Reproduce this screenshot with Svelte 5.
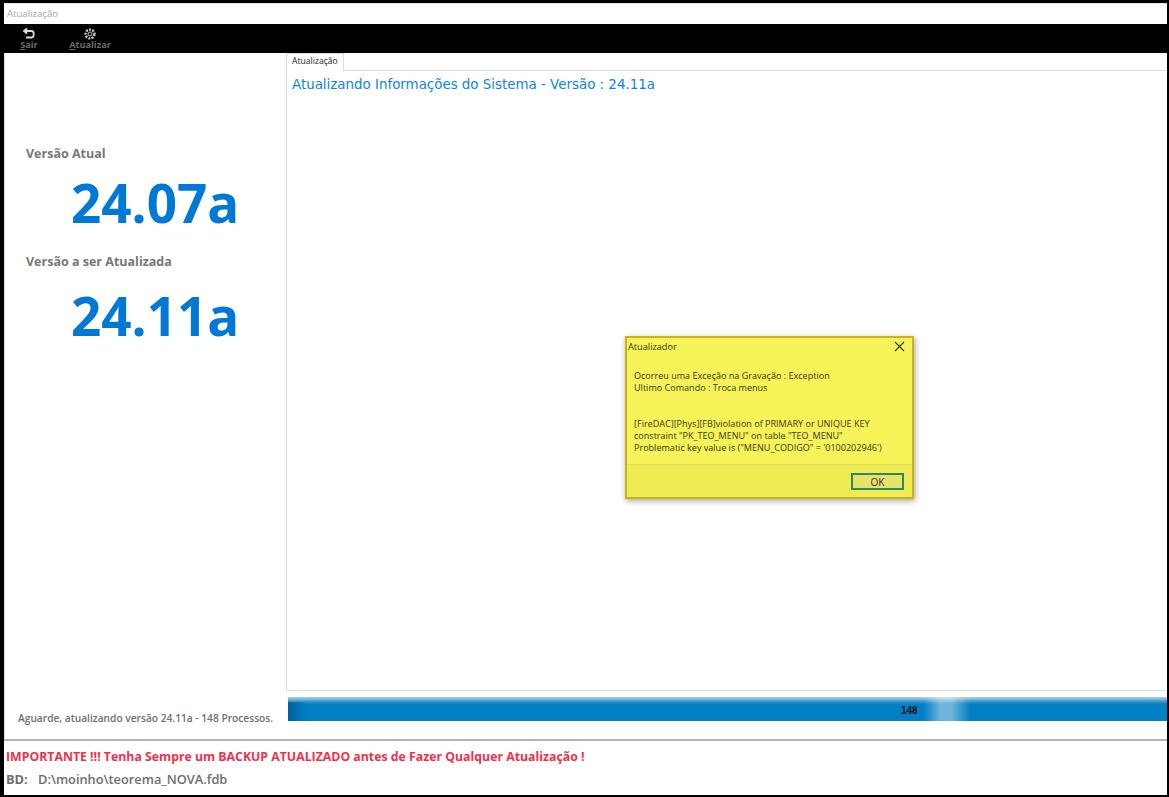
<script>
	const version = "24.11a";
	const processos = 148;
</script>

<div class="window">
	<div class="titlebar">Atualização</div>

	<div class="toolbar">
		<div class="tool sair">
			<svg width="16" height="14" viewBox="0 0 16 14">
				<path d="M6 1.5 L3 4 L6 6.5 M3.5 4 H10.5 C13.5 4 13.5 10.5 10.5 10.5 H5" fill="none" stroke="#d8d8d8" stroke-width="1.8" />
			</svg>
			<span><u>S</u>air</span>
		</div>
		<div class="tool atualizar">
			<svg width="14" height="14" viewBox="0 0 14 14">
				<circle cx="7" cy="7" r="4.4" fill="none" stroke="#c4c4c4" stroke-width="2.4" stroke-dasharray="2 1.2" />
				<circle cx="7" cy="7" r="2" fill="none" stroke="#c4c4c4" stroke-width="1" />
			</svg>
			<span><u>A</u>tualizar</span>
		</div>
	</div>

	<div class="main">
		<aside class="left">
			<div class="versions">
				<div class="label">Versão Atual</div>
				<div class="number">24.07a</div>
				<div class="label second">Versão a ser Atualizada</div>
				<div class="number next">{version}</div>
			</div>
			<div class="wait">Aguarde, atualizando versão {version} - {processos} Processos.</div>
		</aside>

		<section class="right">
			<div class="tabs"><div class="tab">Atualização</div></div>
			<div class="page">
				<h1>Atualizando Informações do Sistema - Versão : {version}</h1>
			</div>
			<div class="progress">
				<div class="edge"></div>
				<div class="shine"></div>
				<span>{processos}</span>
			</div>
		</section>
	</div>

	<div class="footer">
		<div class="warn">IMPORTANTE !!! Tenha Sempre um BACKUP ATUALIZADO antes de Fazer Qualquer Atualização !</div>
		<div class="db"><span class="dbl">BD:</span>D:\moinho\teorema_NOVA.fdb</div>
	</div>

	<div class="dialog">
		<div class="dlg-title">
			<span>Atualizador</span>
			<svg width="11" height="11" viewBox="0 0 11 11">
				<path d="M1 1 L10 10 M10 1 L1 10" stroke="#333" stroke-width="1.1" fill="none" />
			</svg>
		</div>
		<div class="dlg-body">
			<p>Ocorreu uma Exceção na Gravação : Exception<br />Ultimo Comando : Troca menus</p>
			<p>[FireDAC][Phys][FB]violation of PRIMARY or UNIQUE KEY<br />constraint "PK_TEO_MENU" on table "TEO_MENU"<br />Problematic key value is ("MENU_CODIGO" = '0100202946')</p>
		</div>
		<div class="dlg-foot">
			<button type="button">OK</button>
		</div>
	</div>
</div>

<style>
	:global(body) {
		margin: 0;
		background: #000;
	}

	.window {
		position: relative;
		box-sizing: border-box;
		width: 1169px;
		height: 797px;
		padding: 3px 2px 2px 4px;
		background: #000;
		overflow: hidden;
		font-family: "Open Sans", "Noto Sans", sans-serif;
		display: flex;
		flex-direction: column;
	}

	.titlebar {
		height: 21px;
		flex: none;
		background: #fff;
		border-top: 1px solid #e4e4e4;
		box-sizing: border-box;
		color: #a8a4a8;
		font-size: 9.6px;
		line-height: 19px;
		padding-left: 3px;
	}

	.toolbar {
		height: 29px;
		flex: none;
		background: #000;
		display: flex;
		color: #6c6c6c;
		font-weight: 700;
		font-size: 9.2px;
	}

	.tool {
		display: flex;
		flex-direction: column;
		align-items: center;
	}
	.tool svg {
		display: block;
		margin-top: 3px;
	}
	.tool span {
		line-height: 10px;
		margin-top: -1px;
	}
	.sair {
		margin-left: 15px;
		width: 20px;
	}
	.atualizar {
		margin-left: 30px;
		width: 42px;
	}

	.main {
		flex: 1;
		min-height: 0;
		display: flex;
		background: #fff;
	}

	.left {
		width: 282px;
		flex: none;
		display: flex;
		flex-direction: column;
		justify-content: space-between;
		border-left: 1px solid #ddd;
		box-sizing: border-box;
	}

	.versions {
		padding: 92px 0 0 21px;
	}
	.label {
		color: #777;
		font-weight: 700;
		font-size: 12.5px;
		line-height: 18px;
	}
	.label.second {
		margin-top: 14px;
	}
	.number {
		color: #0078d7;
		font-weight: 700;
		font-size: 53px;
		line-height: 72px;
		padding-left: 45px;
		margin-top: 4px;
	}
	.number.next {
		margin-top: 9px;
	}

	.wait {
		color: #6f6f6f;
		font-weight: 600;
		font-size: 10.2px;
		line-height: 16px;
		padding: 0 0 13px 13px;
	}

	.right {
		flex: 1;
		min-width: 0;
		display: flex;
		flex-direction: column;
	}

	.tabs {
		height: 17px;
		flex: none;
		display: flex;
		border-bottom: 1px solid #dcdcdc;
	}
	.tab {
		box-sizing: border-box;
		height: 18px;
		padding: 0 5px;
		background: #fff;
		border: 1px solid #dcdcdc;
		border-bottom: none;
		font-size: 8.6px;
		line-height: 15px;
		color: #222;
	}

	.page {
		flex: 1;
		border-left: 1px solid #dcdcdc;
		border-bottom: 1px solid #dcdcdc;
		padding: 5px 0 0 5px;
	}
	h1 {
		margin: 0;
		font-family: "DejaVu Sans", sans-serif;
		font-weight: 400;
		font-size: 13.4px;
		line-height: 18px;
		color: #0a84e6;
	}

	.progress {
		position: relative;
		flex: none;
		height: 24px;
		margin: 6px 0 18px 2px;
		background: linear-gradient(#c4c8cc 0, #7fbcdc 2px, #3f9fd0 4px, #0380c4 7px, #0380c4 100%);
		overflow: hidden;
	}
	.progress span {
		position: absolute;
		left: 613px;
		top: 7px;
		color: #111;
		font-family: "Liberation Sans", sans-serif;
		font-weight: 700;
		font-size: 10px;
		line-height: 14px;
	}
	.edge {
		position: absolute;
		left: 0;
		top: 5px;
		bottom: 0;
		width: 20px;
		background: linear-gradient(90deg, #00609c, rgba(3, 128, 196, 0));
	}
	.shine {
		position: absolute;
		left: 636px;
		top: 0;
		bottom: 0;
		width: 46px;
		background: linear-gradient(90deg, rgba(255, 255, 255, 0), rgba(255, 255, 255, 0.42) 35%, rgba(255, 255, 255, 0.42) 60%, rgba(255, 255, 255, 0));
	}

	.footer {
		flex: none;
		height: 56px;
		background: #fff;
		border-top: 2px solid #b4b4b4;
		box-sizing: border-box;
		padding: 7px 0 0 2px;
		overflow: hidden;
	}
	.warn {
		color: #f0304c;
		font-weight: 700;
		font-size: 12.3px;
		line-height: 18px;
	}
	.db {
		color: #6e6e6e;
		font-weight: 600;
		font-size: 12.8px;
		line-height: 18px;
		margin-top: 4px;
	}
	.dbl {
		display: inline-block;
		width: 32px;
		font-weight: 700;
	}

	.dialog {
		position: absolute;
		left: 625px;
		top: 336px;
		width: 289px;
		height: 163px;
		box-sizing: border-box;
		background: #f6f359;
		border: 2px solid #c9b21a;
		box-shadow: 1px 2px 6px rgba(0, 0, 0, 0.35);
		display: flex;
		flex-direction: column;
		font-size: 9.05px;
		color: #3a3a1a;
	}
	.dlg-title {
		height: 17px;
		flex: none;
		display: flex;
		align-items: center;
		justify-content: space-between;
		padding: 0 7px 0 1px;
		font-size: 9.2px;
	}
	.dlg-body {
		flex: 1;
		min-height: 0;
		padding: 15px 0 0 7px;
		line-height: 12px;
	}
	.dlg-body p {
		margin: 0 0 24px;
	}
	.dlg-foot {
		height: 33px;
		flex: none;
		box-sizing: border-box;
		background: #efeb52;
		border-top: 1px solid #e2de55;
		display: flex;
		justify-content: flex-end;
		align-items: center;
		padding: 0 8px 0 0;
	}
	button {
		width: 53px;
		height: 17px;
		padding: 0;
		box-sizing: border-box;
		background: #e6e26a;
		border: 2px solid #2e8a5e;
		font: inherit;
		font-size: 10px;
		color: #333;
	}
</style>
